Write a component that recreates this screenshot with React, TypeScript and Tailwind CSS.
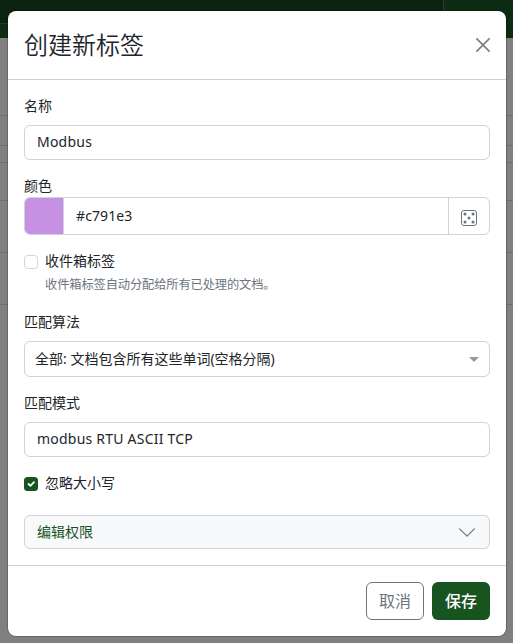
import React from "react";

const rowHeights = ["h-[78px]", "h-[30px]", "h-[17px]", "h-[38px]", "h-[52px]", "h-[52px]"];

function Backdrop() {
  return (
    <div className="flex h-full flex-col bg-[#808080]">
      <div className="flex h-[38px] shrink-0">
        <div className="flex w-[444px] flex-col border-r border-[#234127] bg-[#0c2c13]">
          <div className="h-6 border-b border-[#1f3c23] bg-[#0a220f]" />
        </div>
        <div className="flex-1 bg-[#0c2b13]" />
      </div>
      {rowHeights.map((h, i) => (
        <div key={i} className={`${h} shrink-0 border-b border-[#6e6e6e]`} />
      ))}
    </div>
  );
}

function Label({ children }: { children: React.ReactNode }) {
  return <label className="block h-[21px] leading-[19px]">{children}</label>;
}

const field = "rounded-md border border-[#ced4da] bg-white";

export default function App() {
  return (
    <div className="relative h-[643px] w-[513px] overflow-hidden font-['Noto_Sans','Noto_Sans_CJK_SC',sans-serif] text-[14px] text-[#212529]">
      <Backdrop />
      <div className="absolute top-[11px] left-2 flex h-[625px] w-[498px] flex-col rounded-lg bg-white shadow-[0_0_0_1px_#0003]">
        <header className="flex h-[69px] shrink-0 items-center justify-between border-b border-[#ced0d3] px-4">
          <h4 className="text-[24px] leading-9 font-[350]">创建新标签</h4>
          <svg width="14" height="14" viewBox="0 0 14 14" className="text-[#7f7f7f]" fill="none" stroke="currentColor" strokeWidth="1.7" strokeLinecap="round">
            <path d="M.9.9l12.2 12.2M13.1.9L.9 13.1" />
          </svg>
        </header>

        <main className="flex flex-1 flex-col px-4 pt-4">
          <Label>名称</Label>
          <div className={`${field} mt-2 flex h-[35px] shrink-0 items-center px-3 pb-0.5 tracking-[0.22px]`}>Modbus</div>

          <label className="mt-[15px] block h-[21px] leading-[21px]">颜色</label>
          <div className={`${field} mt-px flex h-[38px] shrink-0 overflow-hidden`}>
            <div className="w-[39px] border-r border-[#ced4da] bg-[#c791e3]" />
            <div className="flex flex-1 items-center px-3 pb-0.5 tracking-[0.1px]">#c791e3</div>
            <div className="flex w-[41px] items-center justify-center border-l border-[#ced4da] pt-1 text-[#6c757d]">
              <svg width="16" height="16" viewBox="0 0 16 16" fill="currentColor">
                <rect x=".5" y=".5" width="15" height="15" rx="2.5" fill="none" stroke="currentColor" />
                <circle cx="4" cy="4" r="1.5" />
                <circle cx="12" cy="4" r="1.5" />
                <circle cx="8" cy="8" r="1.5" />
                <circle cx="4" cy="12" r="1.5" />
                <circle cx="12" cy="12" r="1.5" />
              </svg>
            </div>
          </div>

          <div className="mt-4 flex h-[21px] items-start">
            <span className="mt-1 h-[14px] w-[14px] rounded-[3.5px] border border-[#ced4da]" />
            <span className="ml-[7px] leading-[19px]">收件箱标签</span>
          </div>
          <div className="mt-[3px] ml-[21px] h-[18px] text-[12.25px] leading-5 tracking-[-0.12px] text-[#6c757d]">收件箱标签自动分配给所有已处理的文档。</div>

          <div className="mt-[19px]">
            <Label>匹配算法</Label>
          </div>
          <div className={`${field} mt-2 flex h-[36px] shrink-0 items-center justify-between px-[10px]`}>
            <span className="pb-px">全部: 文档包含所有这些单词(空格分隔)</span>
            <svg width="10" height="5" viewBox="0 0 10 5" fill="#999">
              <path d="M0 0h10L5 5z" />
            </svg>
          </div>

          <div className="mt-4">
            <Label>匹配模式</Label>
          </div>
          <div className={`${field} mt-2 flex h-[35px] shrink-0 items-center px-3 pb-0.5 tracking-[0.22px]`}>modbus RTU ASCII TCP</div>

          <div className="mt-4 flex h-[21px] items-start">
            <span className="mt-1 flex h-[14px] w-[14px] items-center justify-center rounded-[3.5px] bg-[#17541f]">
              <svg width="12" height="12" viewBox="0 0 20 20" fill="none" stroke="#fff" strokeWidth="3" strokeLinecap="round" strokeLinejoin="round">
                <path d="M6 10l3 3 6-6" />
              </svg>
            </span>
            <span className="ml-[7px] leading-[19px]">忽略大小写</span>
          </div>

          <div className="mt-[21px] flex h-[34px] items-center justify-between rounded-md border border-[#ced4da] bg-[#f8f9fa] pr-[14px] pl-3 text-[#17541f]">
            <span className="pb-0.5">编辑权限</span>
            <svg width="16" height="9" viewBox="0 0 16 9" fill="none" stroke="#6c757d" strokeWidth="1.2" strokeLinecap="round" strokeLinejoin="round">
              <path d="M.6.8L8 8.2 15.4.8" />
            </svg>
          </div>
        </main>

        <footer className="flex h-[71px] shrink-0 items-start justify-end gap-2 border-t border-[#ced0d3] px-4 pt-4 text-[16px]">
          <button className="h-[38px] w-[58px] rounded-md border border-[#6c757d] text-[#6c757d]">取消</button>
          <button className="h-[38px] w-[58px] rounded-md bg-[#17541f] font-medium text-white">保存</button>
        </footer>
      </div>
    </div>
  );
}
